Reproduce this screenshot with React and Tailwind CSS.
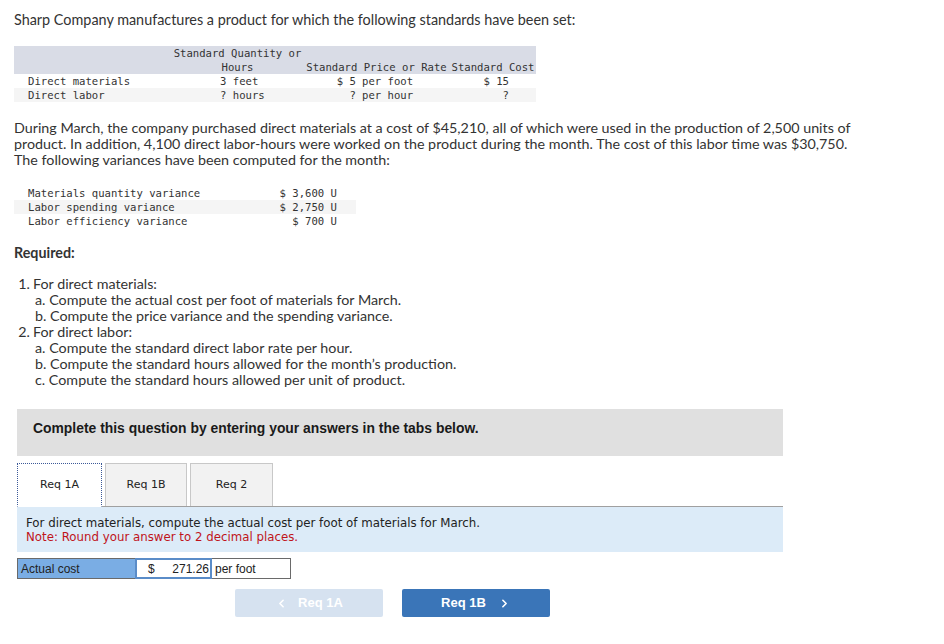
import React from 'react';
import { ChevronLeft, ChevronRight } from 'lucide-react';

const mono = "font-['DejaVu_Sans_Mono',monospace] text-[10.6px] leading-[14px] text-[#333]";

const standards = [
  { label: 'Direct materials', qty: '3 feet', price: '$ 5', unit: 'per foot', cost: '$ 15', bg: 'bg-white' },
  { label: 'Direct labor', qty: '? hours', price: '?', unit: 'per hour', cost: '?', bg: 'bg-[#f5f5f5]' },
];

const variances = [
  { label: 'Materials quantity variance', amount: '$ 3,600 U', bg: 'bg-white' },
  { label: 'Labor spending variance', amount: '$ 2,750 U', bg: 'bg-[#f5f5f5]' },
  { label: 'Labor efficiency variance', amount: '$ 700 U', bg: 'bg-white' },
];

const App = () => {
  return (
    <div className="w-[944px] h-[644px] bg-white overflow-hidden font-['Lato',sans-serif] text-[#333]">
      <div className="pl-[14px] pt-[12px]">
        <p className="text-[14.4px] leading-[16px]">
          Sharp Company manufactures a product for which the following standards have been set:
        </p>

        {/* standards table */}
        <div className={`mt-[18px] w-[522px] ${mono}`}>
          <div className="flex items-end bg-[#d9dce6] h-[28px]">
            <div className="w-[158px]" />
            <div className="w-[131px] text-center">Standard Quantity or<br />Hours</div>
            <div className="w-[147px] text-center">Standard Price or Rate</div>
            <div className="w-[86px] text-center">Standard Cost</div>
          </div>
          {standards.map((row) => (
            <div key={row.label} className={`flex h-[14px] whitespace-pre ${row.bg}`}>
              <div className="w-[158px] pl-[14px]">{row.label}</div>
              <div className="w-[131px] pl-[48px]">{row.qty}</div>
              <div className="w-[147px] flex">
                <span className="w-[53px] text-right">{row.price}</span>
                <span className="pl-[6px]">{row.unit}</span>
              </div>
              <div className="w-[86px] text-right pr-[27px]">{row.cost}</div>
            </div>
          ))}
        </div>

        <p className="mt-[18px] w-[856px] text-[14.3px] leading-[16px]">
          During March, the company purchased direct materials at a cost of $45,210, all of which were used in the production of 2,500 units of product. In addition, 4,100 direct labor-hours were worked on the product during the month. The cost of this labor time was $30,750. The following variances have been computed for the month:
        </p>

        {/* variances */}
        <div className={`mt-[18px] w-[342px] ${mono}`}>
          {variances.map((row) => (
            <div key={row.label} className={`flex h-[14px] whitespace-pre ${row.bg}`}>
              <div className="flex-1 pl-[14px]">{row.label}</div>
              <div className="pr-[19px] text-right">{row.amount}</div>
            </div>
          ))}
        </div>

        <p className="mt-[17px] text-[14.3px] leading-[16px] font-bold">Required:</p>

        <div className="mt-[15px] text-[14.3px] leading-[16px]">
          <div className="flex">
            <span className="w-[16px] text-right">1.</span>
            <span className="pl-[3px]">For direct materials:</span>
          </div>
          <div className="pl-[21px]">a. Compute the actual cost per foot of materials for March.</div>
          <div className="pl-[21px]">b. Compute the price variance and the spending variance.</div>
          <div className="flex">
            <span className="w-[16px] text-right">2.</span>
            <span className="pl-[3px]">For direct labor:</span>
          </div>
          <div className="pl-[21px]">a. Compute the standard direct labor rate per hour.</div>
          <div className="pl-[21px]">b. Compute the standard hours allowed for the month’s production.</div>
          <div className="pl-[21px]">c. Compute the standard hours allowed per unit of product.</div>
        </div>

        {/* answer area */}
        <div className="ml-[3px] mt-[21px] w-[766px]">
          <div className="h-[47px] bg-[#e0e0e0] pl-[16px] pt-[11px] font-['Liberation_Sans',sans-serif] font-bold text-[13.9px] leading-[16px] text-[#1a1a1a]">
            Complete this question by entering your answers in the tabs below.
          </div>

          <div className="mt-[7px] flex items-end gap-[3px] border-b border-[#a0a0a0] font-['DejaVu_Sans',sans-serif] text-[11px] text-[#222]">
            <div className="w-[85px] h-[44px] -mb-px bg-white border border-dotted border-[#3b5998] border-b-white flex items-center justify-center">
              Req 1A
            </div>
            <div className="w-[82px] h-[43px] bg-[#f2f2f2] border border-[#c8c8c8] border-b-0 flex items-center justify-center">
              Req 1B
            </div>
            <div className="w-[83px] h-[43px] bg-[#f2f2f2] border border-[#c8c8c8] border-b-0 flex items-center justify-center">
              Req 2
            </div>
          </div>

          <div className="h-[45px] bg-[#dcebf8] pl-[9px] pt-[9px] font-['DejaVu_Sans',sans-serif] text-[11.8px] leading-[14px]">
            <p className="text-[#222]">For direct materials, compute the actual cost per foot of materials for March.</p>
            <p className="text-[#c0141b]">Note: Round your answer to 2 decimal places.</p>
          </div>

          <div className="mt-[6px] flex h-[21px] font-['Liberation_Sans',sans-serif] text-[12px] text-[#222]">
            <div className="w-[118px] bg-[#7aade4] border border-[#6a6a6a] border-r-0 pl-[3px] flex items-center">
              Actual cost
            </div>
            <div className="w-[77px] bg-white border-2 border-[#5a8cc8] flex items-center justify-between pl-[11px] pr-[1px]">
              <span>$</span>
              <span>271.26</span>
            </div>
            <div className="w-[79px] bg-white border border-[#6a6a6a] border-l-0 pl-[3px] flex items-center">
              per foot
            </div>
          </div>

          <div className="mt-[10px] flex gap-[19px] pl-[218px] font-['Liberation_Sans',sans-serif] font-bold text-[13px] text-white">
            <div className="w-[148px] h-[28px] rounded-[2px] bg-[#d6e2f0] flex items-center justify-center gap-[10px]">
              <ChevronLeft size={13} strokeWidth={3} />
              <span>Req 1A</span>
            </div>
            <div className="w-[148px] h-[28px] rounded-[2px] bg-[#3a75b8] flex items-center justify-center gap-[12px]">
              <span>Req 1B</span>
              <ChevronRight size={13} strokeWidth={3} />
            </div>
          </div>
        </div>
      </div>
    </div>
  );
};

export default App;
